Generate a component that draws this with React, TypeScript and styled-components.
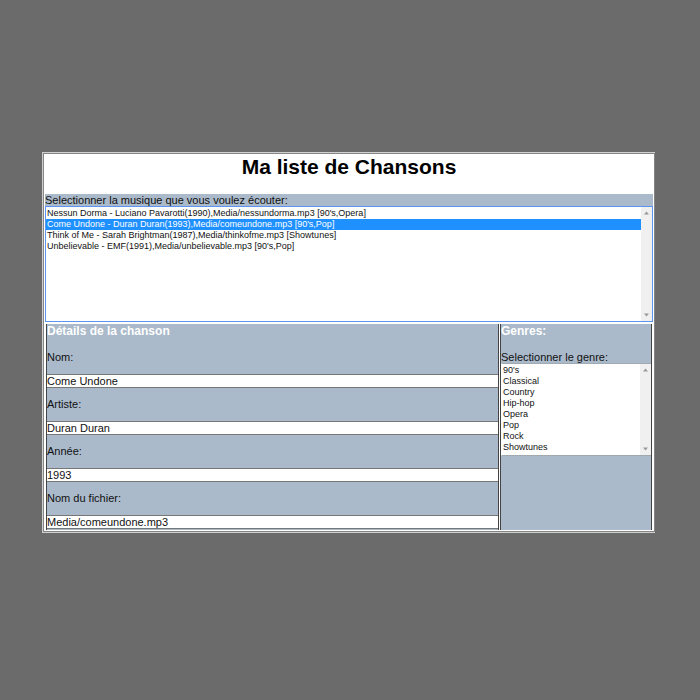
import React, { useState } from "react";
import styled, { createGlobalStyle } from "styled-components";

const GlobalStyle = createGlobalStyle`
  *, *::before, *::after { box-sizing: border-box; }
  body {
    margin: 0;
    background: #6b6b6b;
    color: #111;
    font-family: "Liberation Sans", Arial, sans-serif;
    font-size: 11px;
    line-height: 12px;
  }
`;

const Page = styled.main`
  padding: 152px 45px 40px 42px;
`;

const Frame = styled.div`
  border: 1px solid #d0d0d0;
  border-right: 0;
`;

const Sheet = styled.div`
  display: flex;
  flex-direction: column;
  gap: 2px;
  padding: 0 1px 1px;
  border: 1px solid #858585;
  background: #fff;
`;

const Title = styled.h1`
  margin: 0;
  height: 38px;
  color: #000;
  font-size: 21px;
  line-height: 26px;
  text-align: center;
`;

const SongPicker = styled.section`
  display: flex;
  flex-direction: column;
`;

const BarLabel = styled.label`
  background: #aabaca;
`;

const ListFrame = styled.div<{ $active?: boolean }>`
  display: flex;
  border-style: solid;
  border-width: ${(p) => (p.$active ? "1px" : "1px 0 1px 1px")};
  border-color: ${(p) => (p.$active ? "#5b95f0" : "#a0a8b0 #fff")};
  background: #fff;
`;

const ListBox = styled.select<{ $height: number }>`
  flex: 1;
  min-width: 0;
  height: ${(p) => p.$height}px;
  margin: 0;
  padding: 1px 0 0;
  overflow: hidden;
  border: 0;
  border-radius: 0;
  outline: 0;
  background: #fff;
  color: #111;
  font: 9px/11px "Liberation Sans", Arial, sans-serif;

  option {
    min-height: 11px;
    padding: 0 1px;
    line-height: 11px;
  }
  option:checked {
    background: #1e90ff linear-gradient(#1e90ff, #1e90ff);
    color: #fff;
  }
`;

const ScrollTrack = styled.div`
  display: flex;
  flex-direction: column;
  justify-content: space-between;
  align-items: center;
  width: 11px;
  padding: 4px 0;
  background: #f0f0f0;
`;

const Panels = styled.div`
  display: grid;
  grid-template-columns: minmax(0, 1fr) 152px;
  gap: 1px;
  padding: 0 1px;
`;

const Panel = styled.section`
  display: flex;
  flex-direction: column;
  min-width: 0;
  padding-bottom: 1px;
  border: solid #444;
  border-width: 0 1px;
  background: #aabaca;
`;

const PanelTitle = styled.h2`
  margin: 0 0 12px;
  color: #fff;
  font-size: 12px;
  line-height: 15px;
`;

const Fields = styled.form`
  display: flex;
  flex-direction: column;
  gap: 10px;
`;

const Field = styled.div`
  display: flex;
  flex-direction: column;
  gap: 11px;
`;

const TextInput = styled.input`
  width: 100%;
  height: 14px;
  margin: 0;
  padding: 0;
  border: solid #777;
  border-width: 1px 0;
  border-radius: 0;
  outline: 0;
  background: #fff;
  color: #111;
  font: 11px/12px "Liberation Sans", Arial, sans-serif;
`;

const Arrow = ({ down = false }: { down?: boolean }) => (
  <svg width="5" height="4" viewBox="0 0 5 4" aria-hidden="true">
    <path d={down ? "M0 0.5h5L2.5 3.5z" : "M0 3.5h5L2.5 0.5z"} fill="#999" />
  </svg>
);

const Scroller = () => (
  <ScrollTrack>
    <Arrow />
    <Arrow down />
  </ScrollTrack>
);

const songs = [
  { nom: "Nessun Dorma", artiste: "Luciano Pavarotti", annee: "1990", fichier: "Media/nessundorma.mp3", tags: "90's,Opera" },
  { nom: "Come Undone", artiste: "Duran Duran", annee: "1993", fichier: "Media/comeundone.mp3", tags: "90's,Pop" },
  { nom: "Think of Me", artiste: "Sarah Brightman", annee: "1987", fichier: "Media/thinkofme.mp3", tags: "Showtunes" },
  { nom: "Unbelievable", artiste: "EMF", annee: "1991", fichier: "Media/unbelievable.mp3", tags: "90's,Pop" },
];

const genres = ["90's", "Classical", "Country", "Hip-hop", "Opera", "Pop", "Rock", "Showtunes"];

const fields = [
  { key: "nom", label: "Nom:" },
  { key: "artiste", label: "Artiste:" },
  { key: "annee", label: "Année:" },
  { key: "fichier", label: "Nom du fichier:" },
] as const;

export default function App() {
  const [selected, setSelected] = useState(1);
  const song = songs[selected];

  return (
    <>
      <GlobalStyle />
      <Page>
        <Frame>
          <Sheet>
            <Title>Ma liste de Chansons</Title>
            <SongPicker>
              <BarLabel htmlFor="songs">Selectionner la musique que vous voulez écouter:</BarLabel>
              <ListFrame $active>
                <ListBox
                  id="songs"
                  size={10}
                  $height={114}
                  value={selected}
                  onChange={(e) => setSelected(Number(e.target.value))}
                >
                  {songs.map((s, i) => (
                    <option key={s.nom} value={i}>
                      {`${s.nom} - ${s.artiste}(${s.annee}),${s.fichier} [${s.tags}]`}
                    </option>
                  ))}
                </ListBox>
                <Scroller />
              </ListFrame>
            </SongPicker>
            <Panels>
              <Panel>
                <PanelTitle>Détails de la chanson</PanelTitle>
                <Fields>
                  {fields.map((f) => (
                    <Field key={f.key}>
                      <label htmlFor={f.key}>{f.label}</label>
                      <TextInput id={f.key} key={song[f.key]} defaultValue={song[f.key]} />
                    </Field>
                  ))}
                </Fields>
              </Panel>
              <Panel>
                <PanelTitle>Genres:</PanelTitle>
                <label htmlFor="genres">Selectionner le genre:</label>
                <ListFrame>
                  <ListBox id="genres" size={8} multiple $height={91}>
                    {genres.map((g) => (
                      <option key={g}>{g}</option>
                    ))}
                  </ListBox>
                  <Scroller />
                </ListFrame>
              </Panel>
            </Panels>
          </Sheet>
        </Frame>
      </Page>
    </>
  );
}
